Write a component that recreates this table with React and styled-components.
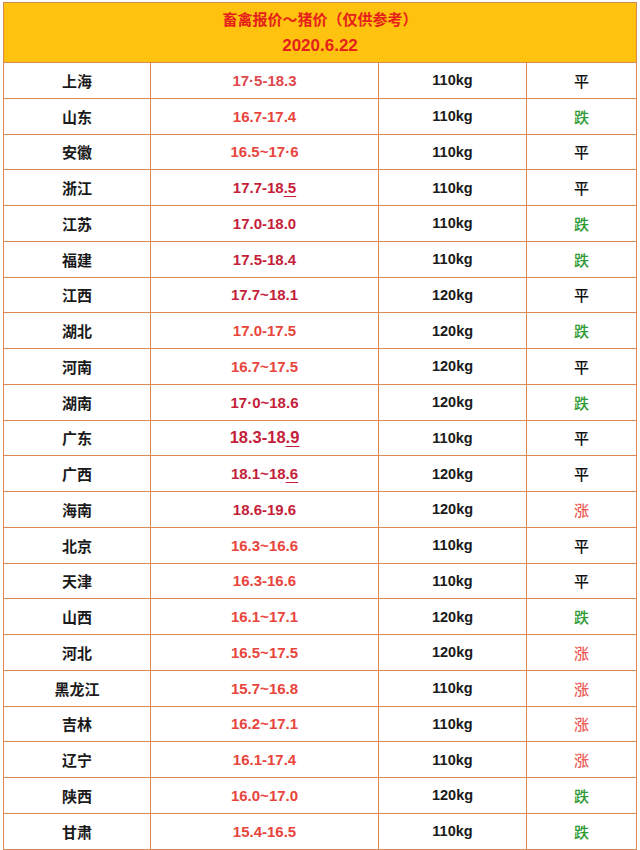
import React from "react";
import styled, { createGlobalStyle } from "styled-components";

const BORDER = "#d98a52";
const RED = "#e8453c";
const CRIMSON = "#c41e3a";

const rows = [
  { city: "上海", price: "17·5-18.3", tone: "light", weight: "110kg", trend: "平" },
  { city: "山东", price: "16.7-17.4", tone: "red", weight: "110kg", trend: "跌" },
  { city: "安徽", price: "16.5~17·6", tone: "red", weight: "110kg", trend: "平" },
  { city: "浙江", price: "17.7-18", under: ".5", tone: "crimson", weight: "110kg", trend: "平" },
  { city: "江苏", price: "17.0-18.0", tone: "crimson", weight: "110kg", trend: "跌" },
  { city: "福建", price: "17.5-18.4", tone: "crimson", weight: "110kg", trend: "跌" },
  { city: "江西", price: "17.7~18.1", tone: "crimson", weight: "120kg", trend: "平" },
  { city: "湖北", price: "17.0-17.5", tone: "red", weight: "120kg", trend: "跌" },
  { city: "河南", price: "16.7~17.5", tone: "red", weight: "120kg", trend: "平" },
  { city: "湖南", price: "17·0~18.6", tone: "crimson", weight: "120kg", trend: "跌" },
  { city: "广东", price: "18.3-18", under: ".9", tone: "crimson", big: true, weight: "110kg", trend: "平" },
  { city: "广西", price: "18.1~18", under: ".6", tone: "crimson", weight: "120kg", trend: "平" },
  { city: "海南", price: "18.6-19.6", tone: "crimson", weight: "120kg", trend: "涨" },
  { city: "北京", price: "16.3~16.6", tone: "red", weight: "110kg", trend: "平" },
  { city: "天津", price: "16.3-16.6", tone: "red", weight: "110kg", trend: "平" },
  { city: "山西", price: "16.1~17.1", tone: "red", weight: "120kg", trend: "跌" },
  { city: "河北", price: "16.5~17.5", tone: "red", weight: "120kg", trend: "涨" },
  { city: "黑龙江", price: "15.7~16.8", tone: "red", weight: "110kg", trend: "涨" },
  { city: "吉林", price: "16.2~17.1", tone: "red", weight: "110kg", trend: "涨" },
  { city: "辽宁", price: "16.1-17.4", tone: "red", weight: "110kg", trend: "涨" },
  { city: "陕西", price: "16.0~17.0", tone: "red", weight: "120kg", trend: "跌" },
  { city: "甘肃", price: "15.4-16.5", tone: "red", weight: "110kg", trend: "跌" },
];

const toneColor = { light: "#e0484c", red: RED, crimson: CRIMSON };
const trendColor = { 平: "#111", 跌: "#2f9a34", 涨: "#ec5a55" };

function App() {
  return (
    <>
      <GlobalStyle />
      <Page>
        <Table>
          <Header>
            <Title>畜禽报价～猪价（仅供参考）</Title>
            <DateLine>2020.6.22</DateLine>
          </Header>
          {rows.map((r) => (
            <Row key={r.city}>
              <CityCell>{r.city}</CityCell>
              <PriceCell $color={toneColor[r.tone]} $big={r.big}>
                {r.price}
                {r.under && <Under>{r.under}</Under>}
              </PriceCell>
              <WeightCell>{r.weight}</WeightCell>
              <TrendCell $color={trendColor[r.trend]}>{r.trend}</TrendCell>
            </Row>
          ))}
        </Table>
      </Page>
    </>
  );
}

const GlobalStyle = createGlobalStyle`
  html, body {
    margin: 0;
    padding: 0;
    background: #ffffff;
  }
  body {
    font-family: "Liberation Sans", "Noto Sans CJK SC", sans-serif;
  }
`;

const Page = styled.div`
  width: 640px;
  height: 850px;
  overflow: hidden;
  padding: 2px 3px 0 3px;
  box-sizing: border-box;
`;

const Table = styled.div`
  width: 634px;
  border: 1px solid ${BORDER};
  border-bottom: none;
  box-sizing: border-box;
`;

const Header = styled.div`
  height: 59px;
  background: #ffc20e;
  border-bottom: 1px solid ${BORDER};
  display: flex;
  flex-direction: column;
  align-items: center;
  justify-content: center;
  gap: 7px;
  color: #e6201b;
  font-weight: 700;
`;

const Title = styled.div`
  font-family: "Noto Sans CJK SC", sans-serif;
  font-size: 15px;
  line-height: 20px;
`;

const DateLine = styled.div`
  font-family: "Liberation Sans", sans-serif;
  font-size: 17px;
  line-height: 20px;
`;

const Row = styled.div`
  display: grid;
  grid-template-columns: 147px 228px 148px 1fr;
  height: 35.75px;
  border-bottom: 1px solid ${BORDER};
  box-sizing: border-box;
`;

const Cell = styled.div`
  display: flex;
  align-items: center;
  justify-content: center;
  font-weight: 700;
  font-size: 14px;
  border-right: 1px solid ${BORDER};
  &:last-child {
    border-right: none;
  }
`;

const CityCell = styled(Cell)`
  font-family: "Noto Sans CJK SC", sans-serif;
  font-size: 15px;
  color: #1a1a1a;
`;

const PriceCell = styled(Cell)`
  font-family: "Liberation Sans", sans-serif;
  font-size: ${(p) => (p.$big ? "16.5px" : "15px")};
  color: ${(p) => p.$color};
`;

const Under = styled.span`
  text-decoration: underline;
  text-underline-offset: 3px;
`;

const WeightCell = styled(Cell)`
  font-family: "Liberation Sans", sans-serif;
  font-size: 14.5px;
  color: #1a1a1a;
`;

const TrendCell = styled(Cell)`
  font-family: "Noto Sans CJK SC", sans-serif;
  font-size: 15px;
  font-weight: 500;
  color: ${(p) => p.$color};
`;

export default App;
